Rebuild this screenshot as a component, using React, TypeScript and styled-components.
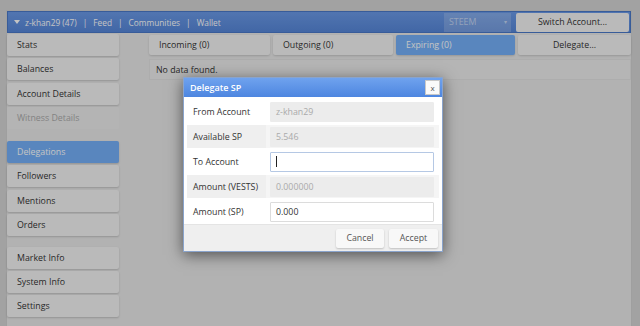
import styled, { createGlobalStyle } from "styled-components";

const GlobalStyle = createGlobalStyle`
  html, body {
    margin: 0;
    padding: 0;
    width: 640px;
    height: 326px;
    overflow: hidden;
    font-family: "Open Sans", "DejaVu Sans", sans-serif;
    font-size: 8.8px;
    color: #333;
  }
  * { box-sizing: border-box; }
`;

const Page = styled.div`
  position: relative;
  width: 640px;
  height: 326px;
  background: #d3d3d3;
  padding: 10px 8px 0 6px;
`;

const Window = styled.div`
  height: 100%;
  background: #e8e8e8;
  border: 1px solid #cfcfcf;
  border-bottom: none;
  display: flex;
  flex-direction: column;
`;

const TopBar = styled.div`
  height: 22px;
  background: linear-gradient(#6a99e6, #5686d8);
  border: 1px solid #4a78c8;
  display: flex;
  align-items: center;
  padding: 0 1px 0 6px;
  color: #fff;
  font-size: 8.3px;
`;

const Caret = styled.span`
  width: 0;
  height: 0;
  border-left: 3.5px solid transparent;
  border-right: 3.5px solid transparent;
  border-top: 4px solid #fff;
  margin-right: 5px;
`;

const NavText = styled.span`
  color: #fff;
`;

const Sep = styled.span`
  margin: 0 6px;
  color: #fff;
`;

const Spacer = styled.div`
  flex: 1;
`;

const Select = styled.div`
  width: 67px;
  height: 19px;
  background: rgba(255, 255, 255, 0.18);
  color: rgba(255, 255, 255, 0.55);
  display: flex;
  align-items: center;
  justify-content: space-between;
  padding: 0 4px 0 5px;
  margin-right: 5px;
  font-size: 8.8px;
`;

const Arrow = styled.span`
  font-size: 6px;
`;

const SwitchButton = styled.div`
  width: 113px;
  height: 19px;
  background: #f3f3f3;
  border-radius: 2px;
  display: flex;
  align-items: center;
  justify-content: center;
  color: #333;
  font-size: 8.8px;
`;

const Body = styled.div`
  flex: 1;
  display: flex;
  padding-top: 1px;
`;

const Sidebar = styled.div`
  width: 113px;
  display: flex;
  flex-direction: column;
  gap: 2.3px;
`;

const SideButton = styled.div<{ $active?: boolean; $disabled?: boolean; $gap?: number }>`
  height: 22px;
  display: flex;
  align-items: center;
  padding-left: 10px;
  border-radius: 2px;
  margin-top: ${(p) => p.$gap ?? 0}px;
  background: ${(p) => (p.$active ? "#74aff7" : p.$disabled ? "#ebebeb" : "#f3f3f3")};
  color: ${(p) => (p.$active ? "#fff" : p.$disabled ? "#aaa" : "#333")};
  box-shadow: ${(p) => (p.$disabled ? "none" : "0 1px 2px rgba(0,0,0,0.18)")};
`;

const Main = styled.div`
  flex: 1;
  padding: 1px 0 0 30px;
  display: flex;
  flex-direction: column;
  gap: 4px;
`;

const Tabs = styled.div`
  display: flex;
  gap: 3px;
`;

const Tab = styled.div<{ $w: number; $active?: boolean; $center?: boolean }>`
  width: ${(p) => p.$w}px;
  height: 20px;
  display: flex;
  align-items: center;
  justify-content: ${(p) => (p.$center ? "center" : "flex-start")};
  padding-left: ${(p) => (p.$center ? "0" : "10px")};
  border-radius: 2px;
  background: ${(p) => (p.$active ? "#74aff7" : "#f3f3f3")};
  color: ${(p) => (p.$active ? "#fff" : "#333")};
  box-shadow: 0 1px 2px rgba(0, 0, 0, 0.15);
`;

const Empty = styled.div`
  height: 21px;
  display: flex;
  align-items: center;
  padding-left: 6px;
  background: #ececec;
  border: 1px solid #e2e2e2;
`;

const Overlay = styled.div`
  position: absolute;
  inset: 0;
  background: rgba(0, 0, 0, 0.23);
`;

const Dialog = styled.div`
  position: absolute;
  left: 183px;
  top: 77px;
  width: 260px;
  height: 175px;
  background: #fff;
  border: 1px solid #8aa4cc;
  box-shadow: 0 3px 14px rgba(0, 0, 0, 0.55);
  display: flex;
  flex-direction: column;
`;

const DialogHead = styled.div`
  height: 19px;
  background: linear-gradient(#6fa2ee, #4d86e0);
  display: flex;
  align-items: center;
  justify-content: space-between;
  padding: 0 2px 0 6px;
  color: #fff;
  font-weight: 600;
  font-size: 9px;
`;

const CloseButton = styled.div`
  width: 15px;
  height: 15px;
  background: #fafafa;
  border: 1px solid #c8c8c8;
  color: #555;
  font-size: 8px;
  font-weight: 400;
  display: flex;
  align-items: center;
  justify-content: center;
`;

const Form = styled.div`
  display: flex;
  flex-direction: column;
  padding: 3px 3px 0 3px;
  gap: 2px;
`;

const Row = styled.div<{ $shade?: boolean }>`
  height: 23px;
  display: grid;
  grid-template-columns: 79px 1fr;
  align-items: center;
  background: ${(p) => (p.$shade ? "#f5f5f5" : "#fff")};
`;

const Label = styled.div<{ $shade?: boolean }>`
  height: 100%;
  display: flex;
  align-items: center;
  padding-left: 6px;
  color: #333;
  background: ${(p) => (p.$shade ? "#efefef" : "transparent")};
`;

const Field = styled.div<{ $kind: "disabled" | "focus" | "normal" }>`
  height: 20px;
  margin: 0 5px 0 4px;
  display: flex;
  align-items: center;
  padding-left: 5px;
  border-radius: 1px;
  color: ${(p) => (p.$kind === "disabled" ? "#aaa" : "#333")};
  background: ${(p) => (p.$kind === "disabled" ? "#ececec" : "#fff")};
  border: 1px solid
    ${(p) => (p.$kind === "focus" ? "#b5c8e4" : p.$kind === "normal" ? "#dcdcdc" : "#ececec")};
`;

const Cursor = styled.span`
  width: 1px;
  height: 11px;
  background: #222;
`;

const Footer = styled.div`
  margin-top: auto;
  height: 27px;
  background: #efefef;
  border-top: 1px solid #e4e4e4;
  display: flex;
  align-items: center;
  justify-content: flex-end;
  gap: 5px;
  padding-right: 4px;
`;

const FootButton = styled.div<{ $w: number }>`
  width: ${(p) => p.$w}px;
  height: 19px;
  background: #f8f8f8;
  border-radius: 2px;
  box-shadow: 0 1px 2px rgba(0, 0, 0, 0.2);
  display: flex;
  align-items: center;
  justify-content: center;
  color: #555;
`;

const sideItems: { label: string; active?: boolean; disabled?: boolean; gap?: number }[] = [
  { label: "Stats" },
  { label: "Balances" },
  { label: "Account Details" },
  { label: "Witness Details", disabled: true },
  { label: "Delegations", active: true, gap: 10 },
  { label: "Followers" },
  { label: "Mentions" },
  { label: "Orders" },
  { label: "Market Info", gap: 8.5 },
  { label: "System Info" },
  { label: "Settings" },
];

export default function App() {
  return (
    <>
      <GlobalStyle />
      <Page>
        <Window>
          <TopBar>
            <Caret />
            <NavText>z-khan29 (47)</NavText>
            <Sep>|</Sep>
            <NavText>Feed</NavText>
            <Sep>|</Sep>
            <NavText>Communities</NavText>
            <Sep>|</Sep>
            <NavText>Wallet</NavText>
            <Spacer />
            <Select>
              <span>STEEM</span>
              <Arrow>▾</Arrow>
            </Select>
            <SwitchButton>Switch Account...</SwitchButton>
          </TopBar>
          <Body>
            <Sidebar>
              {sideItems.map((s) => (
                <SideButton key={s.label} $active={s.active} $disabled={s.disabled} $gap={s.gap}>
                  {s.label}
                </SideButton>
              ))}
            </Sidebar>
            <Main>
              <Tabs>
                <Tab $w={121}>Incoming (0)</Tab>
                <Tab $w={120}>Outgoing (0)</Tab>
                <Tab $w={119} $active>
                  Expiring (0)
                </Tab>
                <Tab $w={113} $center>
                  Delegate...
                </Tab>
              </Tabs>
              <Empty>No data found.</Empty>
            </Main>
          </Body>
        </Window>
        <Overlay />
        <Dialog>
          <DialogHead>
            <span>Delegate SP</span>
            <CloseButton>x</CloseButton>
          </DialogHead>
          <Form>
            <Row>
              <Label>From Account</Label>
              <Field $kind="disabled">z-khan29</Field>
            </Row>
            <Row $shade>
              <Label $shade>Available SP</Label>
              <Field $kind="disabled">5.546</Field>
            </Row>
            <Row>
              <Label>To Account</Label>
              <Field $kind="focus">
                <Cursor />
              </Field>
            </Row>
            <Row $shade>
              <Label $shade>Amount (VESTS)</Label>
              <Field $kind="disabled">0.000000</Field>
            </Row>
            <Row>
              <Label>Amount (SP)</Label>
              <Field $kind="normal">0.000</Field>
            </Row>
          </Form>
          <Footer>
            <FootButton $w={48}>Cancel</FootButton>
            <FootButton $w={49}>Accept</FootButton>
          </Footer>
        </Dialog>
      </Page>
    </>
  );
}
